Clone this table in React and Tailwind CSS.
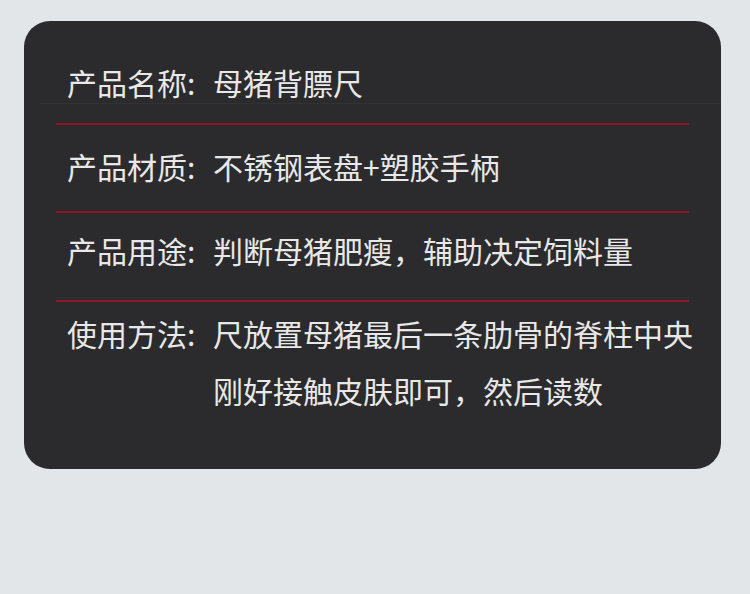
export default function App() {
  const font = { fontFamily: '"Noto Sans CJK SC", "Noto Sans", sans-serif' };
  return (
    <div className="w-[750px] h-[594px] bg-[#e3e6e9] pt-[21px] pl-[24px]" style={font}>
      <div className="w-[697px] h-[448px] bg-[#2b2b2d] rounded-[26px] pt-[39px] text-[30px] text-[#e8e8e8]">
        <div className="flex pl-[43px] leading-[44px]">
          <span className="w-[146px] shrink-0">产品名称:</span>
          <span>母猪背膘尺</span>
        </div>
        <div className="-mt-[1px] ml-[16px] h-px bg-[#323234]"></div>
        <div className="mt-[19px] mx-[32px] h-[2px] bg-[#8e1626]"></div>

        <div className="mt-[19px] flex pl-[43px] leading-[44px]">
          <span className="w-[146px] shrink-0">产品材质:</span>
          <span>不锈钢表盘+塑胶手柄</span>
        </div>
        <div className="mt-[23px] mx-[32px] h-[2px] bg-[#8e1626]"></div>

        <div className="mt-[15px] flex pl-[43px] leading-[44px]">
          <span className="w-[146px] shrink-0">产品用途:</span>
          <span>判断母猪肥瘦，辅助决定饲料量</span>
        </div>
        <div className="mt-[25px] mx-[32px] h-px bg-[#2f3038]"></div>
        <div className="mt-[2px] mx-[32px] h-[2px] bg-[#8e1626]"></div>

        <div className="mt-[3px] flex pl-[43px] leading-[57px]">
          <span className="w-[146px] shrink-0">使用方法:</span>
          <span>
            尺放置母猪最后一条肋骨的脊柱中央
            <br />
            刚好接触皮肤即可，然后读数
          </span>
        </div>
      </div>
    </div>
  );
}
